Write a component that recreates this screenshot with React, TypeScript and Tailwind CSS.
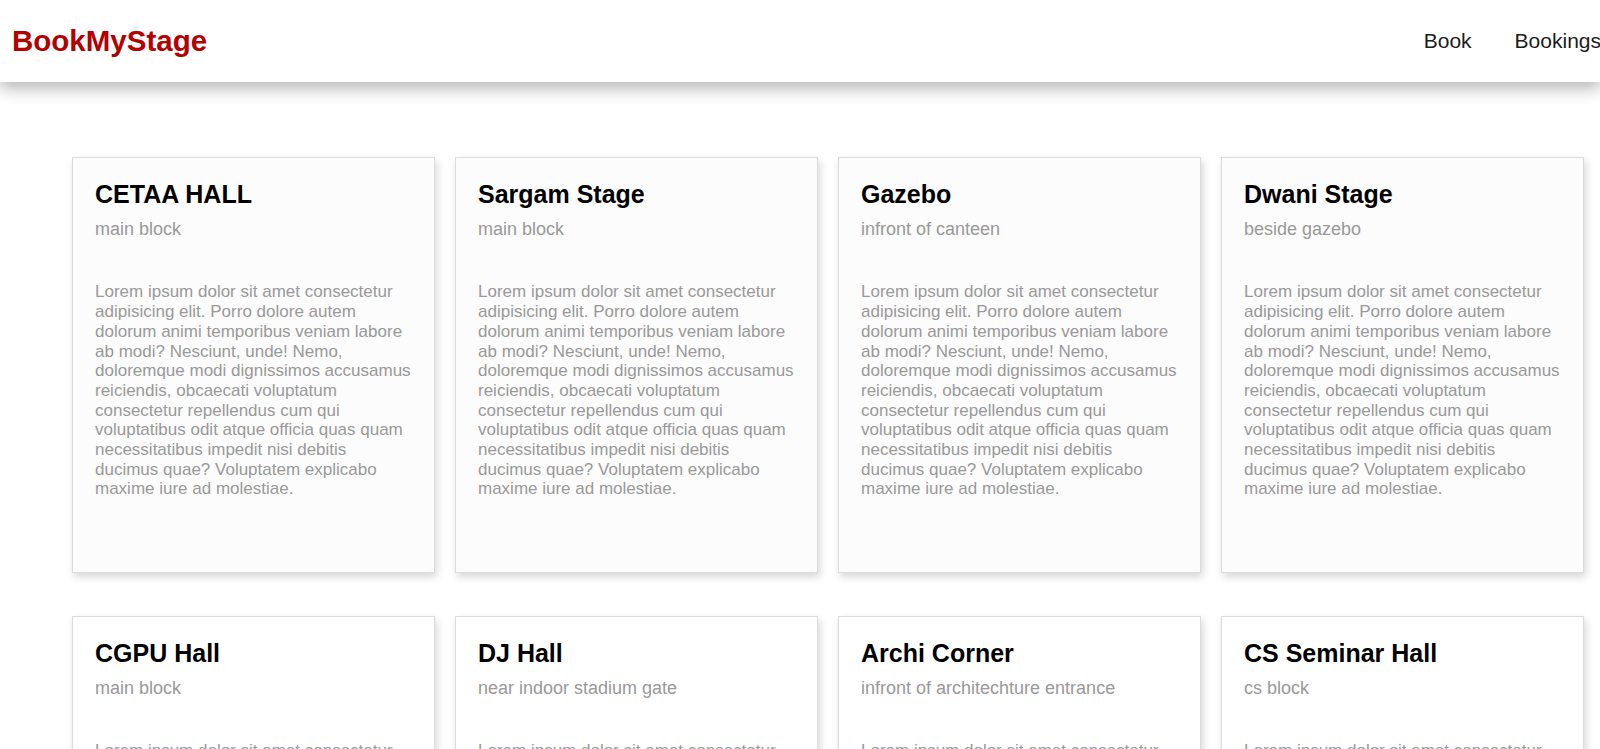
import React from "react";

const LOREM =
  "Lorem ipsum dolor sit amet consectetur adipisicing elit. Porro dolore autem dolorum animi temporibus veniam labore ab modi? Nesciunt, unde! Nemo, doloremque modi dignissimos accusamus reiciendis, obcaecati voluptatum consectetur repellendus cum qui voluptatibus odit atque officia quas quam necessitatibus impedit nisi debitis ducimus quae? Voluptatem explicabo maxime iure ad molestiae.";

const venues = [
  { name: "CETAA HALL", place: "main block", row: 1 },
  { name: "Sargam Stage", place: "main block", row: 1 },
  { name: "Gazebo", place: "infront of canteen", row: 1 },
  { name: "Dwani Stage", place: "beside gazebo", row: 1 },
  { name: "CGPU Hall", place: "main block", row: 2 },
  { name: "DJ Hall", place: "near indoor stadium gate", row: 2 },
  { name: "Archi Corner", place: "infront of architechture entrance", row: 2 },
  { name: "CS Seminar Hall", place: "cs block", row: 2 },
];

export default function App() {
  return (
    <div
      className="min-h-screen bg-white overflow-hidden leading-[1.15]"
      style={{ fontFamily: '"Liberation Sans", Arial, sans-serif' }}
    >
      <header className="relative z-10 flex h-[82px] items-center justify-between bg-white pl-[12px] shadow-[0_6px_16px_rgba(0,0,0,0.3)]">
        <div className="text-[29.5px] font-bold text-[#b30000]">BookMyStage</div>
        <nav className="flex items-center gap-[43px] text-[21px] text-[#1c1c1c] mr-[-1px]">
          <a>Book</a>
          <a>Bookings</a>
        </nav>
      </header>
      <main className="pl-[72px] pt-[75px]">
        <div className="grid grid-cols-[repeat(4,363px)] gap-x-[20px] gap-y-[43px]">
          {venues.map((v) => (
            <div
              key={v.name}
              className={`h-[416px] border border-[#dcdcdc] px-[22px] pt-[22px] shadow-[2px_4px_8px_rgba(0,0,0,0.16)] ${
                v.row === 1 ? "bg-[#fcfcfc]" : "bg-white"
              }`}
            >
              <h2 className="text-[25px] leading-[1.15] font-bold text-black">{v.name}</h2>
              <p className="mt-[10px] text-[18px] leading-[1.15] text-[#999999]">{v.place}</p>
              <p className="mt-[43px] text-[17px] leading-[19.7px] text-[#999999]">{LOREM}</p>
            </div>
          ))}
        </div>
      </main>
    </div>
  );
}
